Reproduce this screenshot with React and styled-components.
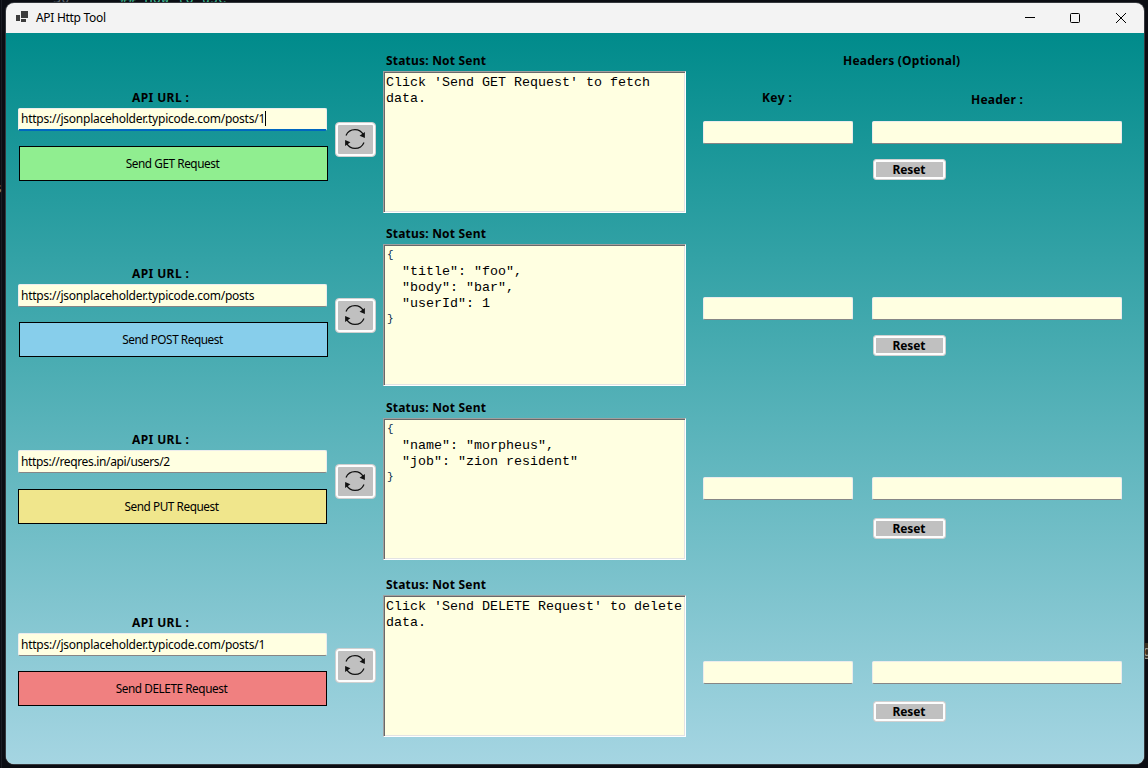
import React from "react";
import styled, { createGlobalStyle } from "styled-components";

const Global = createGlobalStyle`
  * { box-sizing: border-box; }
  html, body { margin: 0; padding: 0; }
  body { overflow: hidden; background: #0b0d13; }
  button, input { font: inherit; margin: 0; }
`;

const Desktop = styled.main`
  position: relative;
  width: 1148px;
  height: 768px;
  padding: 3px 4px 4px 6px;
  overflow: hidden;
  background: linear-gradient(90deg, #0b0d13 0 1px, #1a1d24 1px 2px, #0b0d13 2px);
  font-family: "Noto Sans", "Open Sans", sans-serif;
  font-size: 12px;
  color: #000;
`;

const EditorText = styled.span`
  position: absolute;
  left: ${(p) => p.$x}px;
  top: ${(p) => p.$y}px;
  font: 13.6px/16px "DejaVu Sans Mono", monospace;
  white-space: pre;
  color: ${(p) => p.$color};
  background: ${(p) => p.$bg || "transparent"};
`;

const Window = styled.section`
  position: relative;
  display: flex;
  flex-direction: column;
  width: 1138px;
  height: 761px;
  border-radius: 8px;
  overflow: hidden;
  background: #f3f3f3;
  box-shadow: 0 0 0 1px #35383d;
`;

const TitleBar = styled.header`
  display: flex;
  align-items: center;
  height: 30px;
  flex: none;
  padding-left: 10px;
`;
const AppIcon = styled.svg`
  width: 12px;
  height: 12px;
  margin: -2px 8px 0 0;
`;
const Title = styled.h1`
  margin: 0;
  flex: 1;
  font-size: 12px;
  line-height: 16px;
  font-weight: 400;
  letter-spacing: -0.3px;
`;
const Controls = styled.div`
  display: flex;
  padding-right: 18px;
  svg { display: block; width: 10px; height: 10px; overflow: visible; }
  svg + svg { margin-left: 35px; }
  svg + svg + svg { margin-left: 36px; }
`;

const Form = styled.form`
  flex: 1;
  display: flex;
  flex-direction: column;
  background: linear-gradient(#008b8b, #a5d5e2);
`;

const RequestRow = styled.section`
  display: flex;
  height: ${(p) => p.$h}px;
  flex: none;
  padding-left: 12px;
`;

const Label = styled.label`
  display: block;
  padding-top: 1px;
  font-weight: 700;
  line-height: 16px;
  white-space: pre;
  letter-spacing: ${(p) => p.$ls || 0}px;
`;

const UrlColumn = styled.div`
  width: 317px;
  padding-top: ${(p) => p.$top}px;
  ${Label} { height: 19px; margin-left: 114px; }
`;

const fieldBox = (p) => `
  height: 23px;
  padding: 0 2px 1px;
  border: 1px solid #ececec;
  border-bottom: ${p.$focused ? "2px solid #0067c0" : "1px solid #868686"};
  border-radius: 2px;
  background: #ffffe1;
`;
const Field = styled.input`
  ${fieldBox}
  display: block;
  width: ${(p) => p.$w}px;
  outline: none;
`;
const UrlBox = styled.div`
  ${fieldBox}
  display: flex;
  align-items: center;
  width: 309px;
  white-space: nowrap;
  letter-spacing: ${(p) => p.$ls || 0}px;
`;
const Caret = styled.i`
  width: 1px;
  height: 15px;
  background: #000;
`;

const SendButton = styled.button`
  display: block;
  width: 309px;
  height: 35px;
  margin: ${(p) => p.$gap}px 0 0 ${(p) => p.$shift || 0}px;
  padding: 0 2px 2px 0;
  border: 1px solid #000;
  background: ${(p) => p.$color};
  color: #000;
  font-size: 11.8px;
  letter-spacing: -0.45px;
`;

const RefreshButton = styled.button`
  display: grid;
  place-items: center;
  width: 41px;
  height: 35px;
  margin-top: ${(p) => p.$top}px;
  padding: 0 2px 1px 0;
  border: 1px solid #d0d0d0;
  border-radius: 4px;
  background: #c0c0c0;
  box-shadow: inset 0 0 0 2px #fdfdfd;
  flex: none;
  svg { display: block; width: 22px; height: 22px; }
`;

const ResponseColumn = styled.div`
  width: 303px;
  margin-left: 7px;
  padding-top: 19px;
  flex: none;
  ${Label} { height: 19px; margin-left: 3px; }
`;

const Output = styled.pre`
  margin: 0;
  width: 303px;
  height: 142px;
  padding: 3px 0 0 2px;
  border: 1px solid;
  border-color: #a0a0a0 #fff #fff #a0a0a0;
  box-shadow: inset 1px 1px #696969, inset -1px -1px #e3e3e3;
  background: #ffffe1;
  font: 13.333px/16px "Liberation Mono", "Courier New", monospace;
  white-space: pre-wrap;
`;
const Brace = styled.span`
  padding-left: 1px;
  font-size: 11px;
  line-height: 10px;
  vertical-align: 1px;
  color: #062a4a;
`;

const HeadersColumn = styled.div`
  width: 419px;
  margin-left: 17px;
  padding-top: ${(p) => p.$top}px;
`;
const HeaderTitles = styled.div`
  display: grid;
  grid-template-columns: 59px 209px 1fr;
  grid-template-rows: 37px 32px;
`;
const SectionTitle = styled(Label)`
  grid-column: 1 / -1;
  margin-left: 140px;
`;
const KeyTitle = styled(Label)`
  grid-column: 2;
`;
const HeaderTitle = styled(Label)`
  grid-column: 3;
  padding-top: 3px;
`;
const Fields = styled.div`
  display: flex;
  gap: 19px;
`;
const ResetButton = styled.button`
  display: block;
  width: 73px;
  height: 21px;
  margin: ${(p) => p.$gap}px 0 0 170px;
  padding: 0 1px 0 0;
  border: 1px solid #d0d0d0;
  border-radius: 3px;
  background: #c0c0c0;
  box-shadow: inset 0 0 0 2px #fdfdfd;
  color: #000;
  font-weight: 700;
  line-height: 17px;
  letter-spacing: -0.1px;
`;

const Cycle = () => (
  <svg viewBox="0 0 22 22" fill="none" stroke="#111" strokeWidth="1.2">
    <path d="M2 7.500C3.500 3.900 7 1.600 11 1.600c3.600 0 6.600 1.900 8.400 5" />
    <path d="M20 14.500C18.500 18.100 15 20.400 11 20.400c-3.600 0-6.600-1.900-8.400-5" />
    <path d="M20.900 4v6l-5.300-2.200z" fill="#111" stroke="none" />
    <path d="M1.100 18v-6l5.300 2.200z" fill="#111" stroke="none" />
  </svg>
);

const OutputText = ({ text }) =>
  text.split(/([{}])/).map((part, i) =>
    part === "{" || part === "}" ? <Brace key={i}>{part}</Brace> : part
  );

const rows = [
  {
    h: 173, urlTop: 56, gap: 15, shift: 1, refreshTop: 89, headTop: 19, resetGap: 15,
    url: "https://jsonplaceholder.typicode.com/posts/1", ls: -0.24, focused: true,
    action: "Send GET Request", color: "#90ee90",
    output: "Click 'Send GET Request' to fetch data.",
  },
  {
    h: 174, urlTop: 59, gap: 15, shift: 1, refreshTop: 92, headTop: 91, resetGap: 15,
    url: "https://jsonplaceholder.typicode.com/posts", ls: -0.24,
    action: "Send POST Request", color: "#87ceeb",
    output: '{\n  "title": "foo",\n  "body": "bar",\n  "userId": 1\n}',
  },
  {
    h: 177, urlTop: 51, gap: 16, shift: 0, refreshTop: 84, headTop: 97, resetGap: 18,
    url: "https://reqres.in/api/users/2", ls: -0.36,
    action: "Send PUT Request", color: "#f0e68c",
    output: '{\n  "name": "morpheus",\n  "job": "zion resident"\n}',
  },
  {
    h: 207, urlTop: 57, gap: 15, shift: 0, refreshTop: 91, headTop: 104, resetGap: 17,
    url: "https://jsonplaceholder.typicode.com/posts/1", ls: -0.24,
    action: "Send DELETE Request", color: "#f08080",
    output: "Click 'Send DELETE Request' to delete data.",
  },
];

export default function App() {
  return (
    <Desktop>
      <Global />
      <EditorText $x={53} $y={-10} $color="#5b616b">30</EditorText>
      <EditorText $x={120} $y={-10} $color="#3fb58f">## How to use</EditorText>
      <EditorText $x={-6} $y={180} $color="#8b8b8b">s</EditorText>
      <EditorText $x={1143} $y={643} $color="#9a9a92" $bg="#3a3020">g</EditorText>
      <Window>
        <TitleBar>
          <AppIcon viewBox="0 0 12 12" fill="#3c3c3c">
            <path d="M5 0h7v7H5zM0 4h4v6H0zM5 8h5v3H5z" />
          </AppIcon>
          <Title>API Http Tool</Title>
          <Controls>
            <svg viewBox="0 0 10 10"><path d="M0 4.500h10" stroke="#000" /></svg>
            <svg viewBox="0 0 10 10"><rect x=".5" y=".5" width="9" height="9" rx="1" fill="none" stroke="#000" /></svg>
            <svg viewBox="0 0 10 10"><path d="M0 0l10 10M10 0L0 10" stroke="#000" /></svg>
          </Controls>
        </TitleBar>
        <Form>
          {rows.map((r, i) => (
            <RequestRow key={i} $h={r.h}>
              <UrlColumn $top={r.urlTop}>
                <Label $ls={0.4}>API URL :</Label>
                <UrlBox $focused={r.focused} $ls={r.ls}>
                  <span>{r.url}</span>
                  {r.focused && <Caret />}
                </UrlBox>
                <SendButton type="button" $gap={r.gap} $shift={r.shift} $color={r.color}>
                  {r.action}
                </SendButton>
              </UrlColumn>
              <RefreshButton type="button" aria-label="Refresh" $top={r.refreshTop}>
                <Cycle />
              </RefreshButton>
              <ResponseColumn>
                <Label $ls={0.2}>Status: Not Sent</Label>
                <Output><OutputText text={r.output} /></Output>
              </ResponseColumn>
              <HeadersColumn $top={r.headTop}>
                {i === 0 && (
                  <HeaderTitles>
                    <SectionTitle $ls={0.25}>Headers (Optional)</SectionTitle>
                    <KeyTitle $ls={0.4}>Key :</KeyTitle>
                    <HeaderTitle $ls={0.25}>Header :</HeaderTitle>
                  </HeaderTitles>
                )}
                <Fields>
                  <Field $w={150} />
                  <Field $w={250} />
                </Fields>
                <ResetButton type="button" $gap={r.resetGap}>Reset</ResetButton>
              </HeadersColumn>
            </RequestRow>
          ))}
        </Form>
      </Window>
    </Desktop>
  );
}
